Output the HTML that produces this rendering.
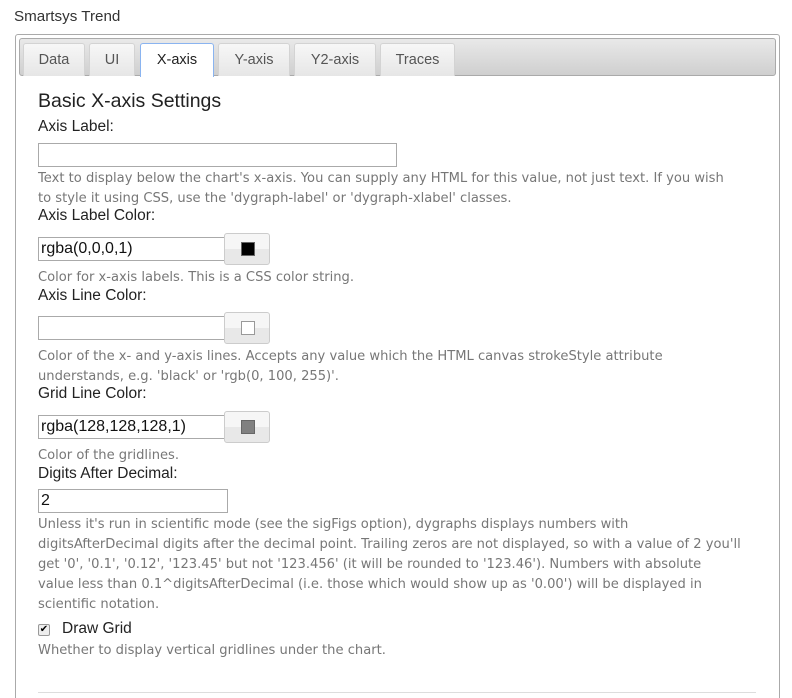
<!DOCTYPE html>
<html style="height:698px;overflow:hidden"><head><style>
body{margin:0;width:792px;height:698px;background:#fff;font-family:"Liberation Sans",sans-serif;position:relative;overflow:hidden}
.a{position:absolute;white-space:nowrap}
.t{position:absolute;top:43px;height:33px;background:linear-gradient(#f7f7f7,#e6e6e6);border:1px solid #d3d3d3;border-bottom:none;border-radius:3px 3px 0 0;box-sizing:border-box;font-size:14.5px;color:#555;text-align:center;line-height:33px}
.lab{position:absolute;left:38px;font-size:15.5px;color:#222}
.help{position:absolute;left:38px;font-family:"DejaVu Sans",sans-serif;font-size:13.1px;color:#777;line-height:20px;white-space:nowrap}
.in{position:absolute;left:38px;height:24px;border:1px solid #aaa;box-sizing:border-box;font-size:16px;line-height:22px;padding-left:2px;color:#111}
.btn{position:absolute;left:224px;width:46px;height:32px;border:1px solid #ccc;border-radius:3px;box-sizing:border-box;background:linear-gradient(#f6f6f6 50%,#e8e8e8 50%)}
.sw{position:absolute;left:16px;top:8px;width:14px;height:14px;border:1px solid #666;box-sizing:border-box}
</style></head><body>
<div class="a" style="left:14px;top:8px;font-size:15.2px;color:#333">Smartsys Trend</div>
<div class="a" style="left:15px;top:34px;width:765px;height:680px;border:1px solid #aaa;border-radius:3px;box-sizing:border-box"></div>
<div class="a" style="left:19px;top:38px;width:757px;height:38px;border:1px solid #aaa;border-radius:3px;box-sizing:border-box;background:linear-gradient(#e9e9e9,#cfcfcf)"></div>
<div class="t" style="left:23px;width:62px">Data</div>
<div class="t" style="left:89px;width:46px">UI</div>
<div class="t" style="left:140px;width:74px;background:#fff;border:1px solid #8ab4f0;border-bottom:none;color:#222;height:34px">X-axis</div>
<div class="t" style="left:218px;width:72px">Y-axis</div>
<div class="t" style="left:294px;width:82px">Y2-axis</div>
<div class="t" style="left:380px;width:75px">Traces</div>
<div class="a" style="left:38px;top:90px;font-size:19.5px;color:#222">Basic X-axis Settings</div>
<div class="lab" style="top:118px">Axis Label:</div>
<div class="in" style="top:143px;width:359px"></div>
<div class="help" style="top:169px">Text to display below the chart's x-axis. You can supply any HTML for this value, not just text. If you wish<br>to style it using CSS, use the 'dygraph-label' or 'dygraph-xlabel' classes.</div>
<div class="lab" style="top:207px">Axis Label Color:</div>
<div class="in" style="top:237px;width:187px">rgba(0,0,0,1)</div>
<div class="btn" style="top:233px"><div class="sw" style="background:#000"></div></div>
<div class="help" style="top:268px">Color for x-axis labels. This is a CSS color string.</div>
<div class="lab" style="top:287px">Axis Line Color:</div>
<div class="in" style="top:316px;width:187px"></div>
<div class="btn" style="top:312px"><div class="sw" style="background:#fff;border-color:#999"></div></div>
<div class="help" style="top:347px">Color of the x- and y-axis lines. Accepts any value which the HTML canvas strokeStyle attribute<br>understands, e.g. 'black' or 'rgb(0, 100, 255)'.</div>
<div class="lab" style="top:385px">Grid Line Color:</div>
<div class="in" style="top:415px;width:187px">rgba(128,128,128,1)</div>
<div class="btn" style="top:411px"><div class="sw" style="background:#808080"></div></div>
<div class="help" style="top:446px">Color of the gridlines.</div>
<div class="lab" style="top:465px">Digits After Decimal:</div>
<div class="in" style="top:489px;width:190px">2</div>
<div class="help" style="top:515px">Unless it's run in scientific mode (see the sigFigs option), dygraphs displays numbers with<br>digitsAfterDecimal digits after the decimal point. Trailing zeros are not displayed, so with a value of 2 you'll<br>get '0', '0.1', '0.12', '123.45' but not '123.456' (it will be rounded to '123.46'). Numbers with absolute<br>value less than 0.1^digitsAfterDecimal (i.e. those which would show up as '0.00') will be displayed in<br>scientific notation.</div>
<div class="a" style="left:38px;top:624px;width:12px;height:12px;border:1px solid #999;border-radius:2px;box-sizing:border-box;background:#eee;font-size:10px;line-height:10px;text-align:center">✔</div>
<div class="lab" style="left:62px;top:620px">Draw Grid</div>
<div class="help" style="top:641px">Whether to display vertical gridlines under the chart.</div>
<div class="a" style="left:38px;top:692px;width:718px;height:1px;background:#ddd"></div>
</body></html>
